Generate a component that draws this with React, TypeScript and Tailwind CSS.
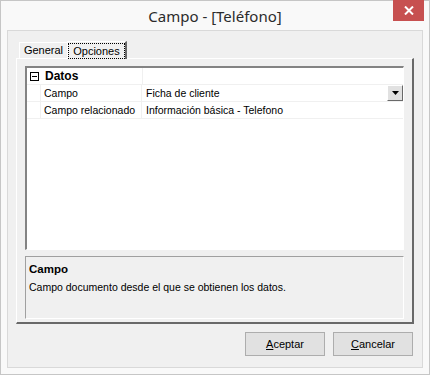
import React from "react";

const rows = [
  { name: "Campo", value: "Ficha de cliente", combo: true },
  { name: "Campo relacionado", value: "Información básica - Telefono", combo: false },
];

function ClassicButton({ label, hot }: { label: string; hot: string }) {
  const rest = label.slice(1);
  return (
    <button className="w-[80px] h-[24px] bg-[#e1e1e1] border border-[#adadad] text-[11px] text-black flex items-center justify-center">
      <span>
        <span className="underline">{hot}</span>
        {rest}
      </span>
    </button>
  );
}

export default function App() {
  return (
    <div
      className="w-[430px] h-[375px] bg-[#f9f9f9] border border-[#c6c6c6] flex flex-col"
      style={{ fontFamily: '"Liberation Sans", Arial, sans-serif' }}
    >
      {/* title bar */}
      <div className="h-[29px] relative flex items-center justify-center">
        <span
          className="text-[15px] text-[#2b2b2b] mt-[2px]"
          style={{ fontFamily: '"Noto Sans", "Open Sans", sans-serif' }}
        >
          Campo - [Teléfono]
        </span>
        <div className="absolute right-[5px] top-[-1px] w-[31px] h-[21px] bg-[#c75050] flex items-center justify-center">
          <svg width="10" height="9" viewBox="0 0 10 9">
            <path d="M1 0.5 L9 8.5 M9 0.5 L1 8.5" stroke="#fff" strokeWidth="2" />
          </svg>
        </div>
      </div>

      {/* client frame */}
      <div className="ml-[6px] w-[416px] h-[338px] border border-[#d9d9d9] bg-[#f0f0f0] flex flex-col">
        {/* tabs */}
        <div className="flex items-end h-[27px] pl-[11px] pt-[9px]">
          <div className="h-[16px] w-[49px] border-t border-l border-white border-r border-r-[#a0a0a0] flex items-center justify-center text-[11px] text-black">
            General
          </div>
          <div className="h-[18px] w-[60px] border-t border-l border-white border-r-2 border-r-[#696969] bg-[#f0f0f0] flex items-center justify-center text-[11px] text-black relative z-10 -mb-[1px] -ml-[1px]">
            <span className="border border-dotted border-black px-[1px] leading-[14px] w-[57px] text-center">Opciones</span>
          </div>
        </div>

        {/* tab panel */}
        <div className="ml-[8px] w-[398px] h-[266px] border-t border-l border-white border-r-2 border-b-2 border-r-[#696969] border-b-[#696969] flex flex-col pl-[8px] pt-[7px]">
          {/* property grid */}
          <div className="w-[379px] h-[184px] border-t-2 border-l-2 border-t-[#838383] border-l-[#838383] border-r border-b border-r-white border-b-white bg-white flex flex-col text-[10.5px] text-black">
            {/* category row */}
            <div className="flex h-[17px] border-b border-[#f0f0f0]">
              <div className="w-[14px] flex items-center justify-center">
                <div className="w-[9px] h-[9px] border border-black flex items-center justify-center">
                  <div className="w-[5px] h-[1px] bg-black" />
                </div>
              </div>
              <div className="w-[102px] border-r border-[#f0f0f0] font-bold pl-[4px] leading-[16px] text-[12px]">
                Datos
              </div>
              <div className="flex-1" />
            </div>
            {rows.map((r) => (
              <div key={r.name} className="flex h-[17px] border-b border-[#f0f0f0]">
                <div className="w-[14px] border-r border-[#f0f0f0]" />
                <div className="w-[101px] border-r border-[#f0f0f0] pl-[3px] leading-[16px] whitespace-nowrap">
                  {r.name}
                </div>
                <div className="flex-1 pl-[4px] leading-[16px] flex justify-between">
                  <span>{r.value}</span>
                  {r.combo && (
                    <div className="w-[16px] h-[16px] bg-[#e1e1e1] border border-t-white border-l-white border-r-[#696969] border-b-[#696969] flex items-center justify-center">
                      <svg width="7" height="4" viewBox="0 0 7 4">
                        <path d="M0 0 H7 L3.5 4 Z" fill="#000" />
                      </svg>
                    </div>
                  )}
                </div>
              </div>
            ))}
          </div>

          {/* description pane */}
          <div className="mt-[6px] w-[379px] h-[63px] border-t border-l border-[#a0a0a0] border-r border-b border-r-white border-b-white text-[10.5px] text-black pl-[3px] pt-[5px]">
            <div className="font-bold text-[11.5px] leading-[14px]">Campo</div>
            <div className="mt-[4px] leading-[14px]">Campo documento desde el que se obtienen los datos.</div>
          </div>
        </div>

        {/* buttons */}
        <div className="flex justify-end gap-[8px] pr-[9px] mt-[8px]">
          <ClassicButton label="Aceptar" hot="A" />
          <ClassicButton label="Cancelar" hot="C" />
        </div>
      </div>
    </div>
  );
}
